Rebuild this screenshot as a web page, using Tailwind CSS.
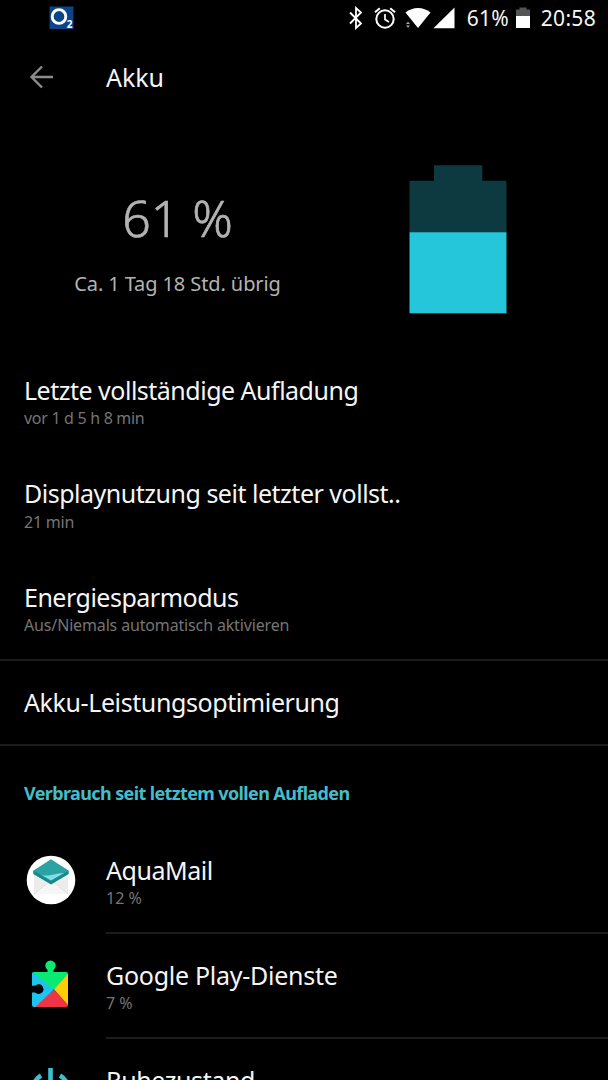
<!DOCTYPE html>
<html lang="de">
<head>
    <meta charset="UTF-8">
    <meta name="viewport" content="width=device-width, initial-scale=1.0">
    <title>Akku</title>
    <script src="https://cdn.jsdelivr.net/npm/@tailwindcss/browser@4"></script>
</head>
<body class="bg-black text-[#f5f5f5] font-['Noto_Sans',sans-serif] h-[1080px] overflow-hidden">
    <!-- Status bar -->
    <header class="flex items-center h-9 pl-[49px] pr-3">
        <svg class="w-[25px] h-6" viewBox="0 0 25 24">
            <rect x="0.5" y="0.5" width="24" height="22.5" fill="#0b4488"></rect>
            <ellipse cx="10" cy="10.5" rx="6.8" ry="6.9" fill="none" stroke="#fff" stroke-width="2.9"></ellipse>
            <text x="17.8" y="21.8" fill="#fff" font-size="10" font-weight="700" font-family="Noto Sans, sans-serif">2</text>
        </svg>
        <div class="flex items-center ml-auto">
            <svg class="w-4 h-6" viewBox="0 0 16 24" fill="none" stroke="#fff" stroke-width="1.8">
                <path d="M2 6.5l11 11-5 4.5V2l5 4.5-11 11"></path>
            </svg>
            <svg class="w-6 h-6 ml-[9px]" viewBox="0 0 24 24" fill="none" stroke="#fff" stroke-width="2">
                <circle cx="12" cy="13" r="8.7"></circle>
                <path d="M12 8v5.5l4 2.5" stroke-width="1.7"></path>
                <path d="M2 6.3l4.8-4M22 6.3l-4.8-4"></path>
            </svg>
            <svg class="w-[26px] h-6 ml-2" viewBox="0 0 26 24" fill="#fff">
                <path d="M0.5 6.500C7.500 0.500 18.500 0.500 25.500 6.500L13 22z"></path>
                <path d="M1 18l2-2.3 2 2.3zM1 19.5l2 2.3 2-2.3z" fill="#aaa"></path>
            </svg>
            <svg class="w-[22px] h-6 ml-0.5" viewBox="0 0 22 24" fill="#fff">
                <path d="M0.5 22.3H21.5V1.5z"></path>
            </svg>
            <span class="text-[21px] leading-9 ml-[12px] tracking-[0.2px]">61%</span>
            <svg class="w-[14px] h-6 ml-[7px]" viewBox="0 0 14 24">
                <path d="M3.5 1.5h7v2H14V10H0V3.5h3.500z" fill="#555"></path>
                <rect y="10" width="14" height="12" fill="#fff"></rect>
            </svg>
            <span class="text-[21px] leading-9 ml-[11px] tracking-[0.3px]">20:58</span>
        </div>
    </header>

    <!-- Title bar -->
    <div class="flex items-center h-[82px] pl-[29px]">
        <svg class="w-6 h-6" viewBox="0 0 24 24" fill="none" stroke="#8c8c8c" stroke-width="2.4">
            <path d="M24 12H3M13 1.5L2.5 12 13 22.5"></path>
        </svg>
        <h1 class="text-[25px] leading-8 ml-[53px] tracking-[-0.1px]">Akku</h1>
    </div>

    <!-- Battery summary -->
    <section class="flex h-[230.5px] pt-[2px] text-[#b3b3b3]">
        <div class="w-[355px] flex flex-col items-center pt-[66px]">
            <div class="text-[50px] leading-[64px] font-light [-webkit-text-stroke:0.7px_#b3b3b3]">61 %</div>
            <div class="text-[20px] leading-7 mt-[20px] tracking-[-0.1px]">Ca. 1 Tag 18 Std. übrig</div>
        </div>
        <svg class="w-[98px] h-[149px] mt-[45px] ml-[54px]" viewBox="0 0 98 149">
            <path d="M25 0.3h48.300v15.400H97.500V68H0.500V15.700h24.500z" fill="#0d3a40"></path>
            <rect x="0.500" y="67.300" width="97" height="81" fill="#26c6da"></rect>
        </svg>
    </section>

    <!-- Settings -->
    <ul>
        <li class="h-[103.5px] pt-6 pl-6">
            <div class="text-[25px] leading-[34px] tracking-[-0.5px]">Letzte vollständige Aufladung</div>
            <div class="text-[16px] leading-[22px] tracking-[-0.3px] text-[#757575]">vor 1 d 5 h 8 min</div>
        </li>
        <li class="h-[103.5px] pt-6 pl-6">
            <div class="text-[25px] leading-[34px] tracking-[-0.49px]">Displaynutzung seit letzter vollst..</div>
            <div class="text-[16px] leading-[22px] mt-px tracking-[-0.2px] text-[#757575]">21 min</div>
        </li>
        <li class="h-[103.5px] pt-6 pl-6">
            <div class="text-[25px] leading-[34px] tracking-[-0.5px]">Energiesparmodus</div>
            <div class="text-[16px] leading-[22px] tracking-[-0.15px] text-[#757575]">Aus/Niemals automatisch aktivieren</div>
        </li>
        <li class="flex items-center h-[87px] pl-6 pb-0.5 border-y-2 border-[#1c1c1c]">
            <div class="text-[25px] leading-[34px] tracking-[-0.4px]">Akku-Leistungsoptimierung</div>
        </li>
    </ul>

    <!-- Usage by app -->
    <h2 class="text-[18px] leading-6 font-bold text-[#45bccb] mt-[35px] pl-6 tracking-[-0.62px]">Verbrauch seit letztem vollen Aufladen</h2>
    <ul class="mt-[22px]">
        <li class="flex h-[107px] pl-[26px]">
            <svg class="w-[50px] h-[50px] mt-[28px]" viewBox="0 0 50 50">
                <circle cx="25" cy="25" r="24.3" fill="#fff"></circle>
                <path d="M8 17h34v22H8z" fill="#ececec"></path>
                <path d="M8 39l14-11.500h6L42 39" fill="#f6f6f6" stroke="#ddd" stroke-width="0.8"></path>
                <path d="M7.500 15.500L25 4.300l17.500 11.200v3.500L25 29 7.500 19z" fill="#2ca3a3"></path>
                <path d="M10 17.500c6 3.500 10 3.500 15 2.500s9-2.500 15-2L25 26.500z" fill="#7fdfe6"></path>
                <path d="M7.500 15.500L25 25.500l17.500-10v3.500L25 29.500 7.500 19z" fill="#198a8c"></path>
            </svg>
            <div class="flex-1 ml-[30px] pt-[26px] border-b-2 border-[#1c1c1c]">
                <div class="text-[25px] leading-[34px] tracking-[-0.45px]">AquaMail</div>
                <div class="text-[16px] leading-[22px] text-[#757575]">12 %</div>
            </div>
        </li>
        <li class="flex h-[105px] pl-[26px]">
            <svg class="w-[50px] h-[50px] mt-[26px]" viewBox="0 0 50 50">
                <defs>
                    <clipPath id="puzzle">
                        <path d="M8 12H21.5V10A5.2 5.2 0 1 1 27.5 10V12H40a2 2 0 0 1 2 2V45a2 2 0 0 1-2 2H8a2 2 0 0 1-2-2V32.5H9A5 5 0 1 0 9 25.500H6V14a2 2 0 0 1 2-2z"></path>
                    </clipPath>
                </defs>
                <g clip-path="url(#puzzle)">
                    <path d="M0 0h50v29H0z" fill="#0bea70"></path>
                    <path d="M50 5L28 29.500 50 55z" fill="#ffcd05"></path>
                    <path d="M4 50L28 29.500 46 49v3z" fill="#ee3446"></path>
                    <path d="M4 10L28 29.500 6 50H4z" fill="#1cc4f0"></path>
                </g>
            </svg>
            <div class="flex-1 ml-[30px] pt-[24px] border-b-2 border-[#1c1c1c]">
                <div class="text-[25px] leading-[34px] tracking-[-0.27px]">Google Play-Dienste</div>
                <div class="text-[16px] leading-[22px] text-[#757575]">7 %</div>
            </div>
        </li>
        <li class="flex h-[41px] overflow-hidden pl-[26px]">
            <svg class="w-[50px] h-[50px] shrink-0 mt-[26px]" viewBox="0 0 50 50" fill="none" stroke="#38c1d2" stroke-width="4.6">
                <path d="M24.500 3v22M15 10.500a18 18 0 1 0 19 0"></path>
            </svg>
            <div class="flex-1 ml-[30px] pt-[24px]">
                <div class="text-[25px] leading-[34px] tracking-[-0.4px]">Ruhezustand</div>
            </div>
        </li>
    </ul>
</body>
</html>
